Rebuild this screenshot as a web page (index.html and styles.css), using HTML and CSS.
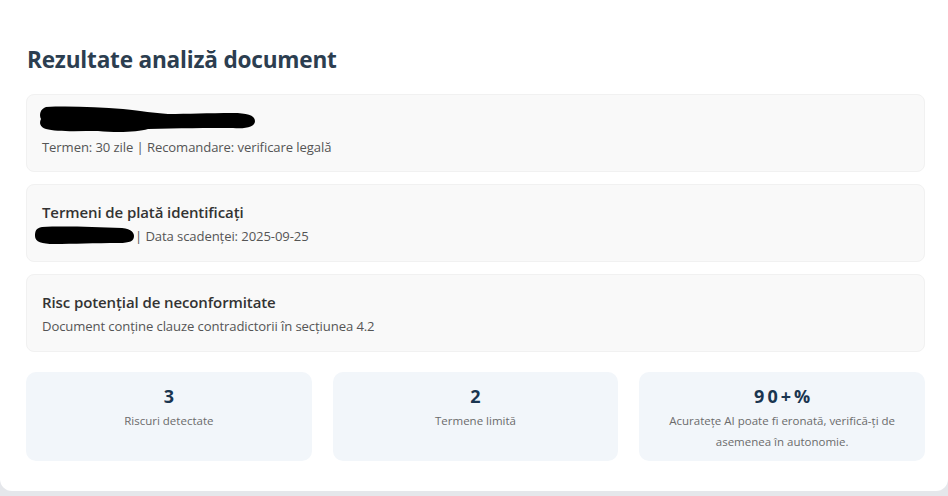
FILE: index.html
```html
<!DOCTYPE html>
<html lang="ro">
<head>
<meta charset="utf-8">
<title>Rezultate analiză document</title>
<link rel="stylesheet" href="styles.css">
</head>
<body>
<div class="page">
  <section class="card">
    <h1 class="title">Rezultate analiză document</h1>
    <div class="items">
      <div class="item">
        <div class="item-title redacted-row">
          <svg class="blob blob-1" width="220" height="28" viewBox="0 0 220 28" aria-hidden="true">
            <path d="M8 1 C30 0 60 1 85 3 C105 5 115 7 130 8 C150 8 170 7 195 7 C208 7 217 9 217 15 C217 21 208 23 195 22 C170 22 140 22 110 23 C100 26 80 27 60 25 C40 25 18 26 8 23 C2 21 1 17 3 13 C1 9 2 3 8 1 Z" fill="#000"/>
          </svg>
        </div>
        <div class="item-sub">Termen: 30 zile | Recomandare: verificare legală</div>
      </div>
      <div class="item">
        <div class="item-title">Termeni de plată identificați</div>
        <div class="item-sub"><svg class="blob blob-2" width="101" height="19" viewBox="0 0 101 19" aria-hidden="true"><path d="M8 1 C30 0 60 1 88 2 C98 3 100 7 100 10 C100 15 96 17 85 17 C60 17 40 18 20 18 C8 18 1 16 1 10 C1 5 2 2 8 1 Z" fill="#000"/></svg>| Data scadenței: 2025-09-25</div>
      </div>
      <div class="item">
        <div class="item-title">Risc potențial de neconformitate</div>
        <div class="item-sub">Document conține clauze contradictorii în secțiunea 4.2</div>
      </div>
    </div>
    <div class="stats">
      <div class="stat">
        <div class="stat-num">3</div>
        <div class="stat-label">Riscuri detectate</div>
      </div>
      <div class="stat">
        <div class="stat-num">2</div>
        <div class="stat-label">Termene limită</div>
      </div>
      <div class="stat">
        <div class="stat-num wide">90+%</div>
        <div class="stat-label">Acuratețe AI poate fi eronată, verifică-ți de asemenea în autonomie.</div>
      </div>
    </div>
  </section>
</div>
</body>
</html>
```
FILE: styles.css
```css
html, body {
  margin: 0;
  padding: 0;
  background: #e5e7eb;
}
body {
  font-family: "Open Sans", "Noto Sans", "Liberation Sans", sans-serif;
  color: #333;
}
.page {
  width: 948px;
  height: 496px;
  overflow: hidden;
}
.card {
  background: #fff;
  height: 491px;
  box-sizing: border-box;
  border-radius: 0 0 12px 12px;
  padding: 43px 23px 0 26px;
}
.title {
  margin: 0 0 17px 1px;
  font-size: 22.6px;
  line-height: 34px;
  font-weight: 700;
  color: #2c3e50;
  letter-spacing: -0.2px;
}
.items {
  display: flex;
  flex-direction: column;
  gap: 12px;
}
.item {
  background: #f9f9f9;
  border: 1px solid #f1f1f1;
  border-radius: 8px;
  height: 78px;
  box-sizing: border-box;
  padding: 15px 16px 0 15px;
}
.item-title {
  font-size: 15px;
  line-height: 24px;
  font-weight: 600;
  color: #333;
  margin-bottom: 2px;
  letter-spacing: -0.1px;
}
.redacted-row {
  height: 25px;
  position: relative;
}
.blob {
  display: inline-block;
  vertical-align: middle;
}
.blob-1 {
  position: absolute;
  left: -4px;
  top: -4px;
}
.blob-2 {
  margin-left: -8px;
  margin-top: -4px;
}
.item-sub {
  font-size: 13.1px;
  line-height: 21px;
  color: #555;
  letter-spacing: -0.1px;
}
.stats {
  margin-top: 20px;
  display: grid;
  grid-template-columns: repeat(3, 1fr);
  gap: 21px;
}
.stat {
  background: #f2f6fa;
  border-radius: 10px;
  height: 89px;
  box-sizing: border-box;
  padding: 11px 18px 0;
  text-align: center;
}
.stat-num {
  font-size: 18px;
  line-height: 27px;
  font-weight: 700;
  color: #1a3550;
}
.stat-num.wide {
  letter-spacing: 3px;
  text-indent: 3px;
}
.stat-label {
  font-size: 11.5px;
  line-height: 21px;
  color: #6b6b6b;
}
```
